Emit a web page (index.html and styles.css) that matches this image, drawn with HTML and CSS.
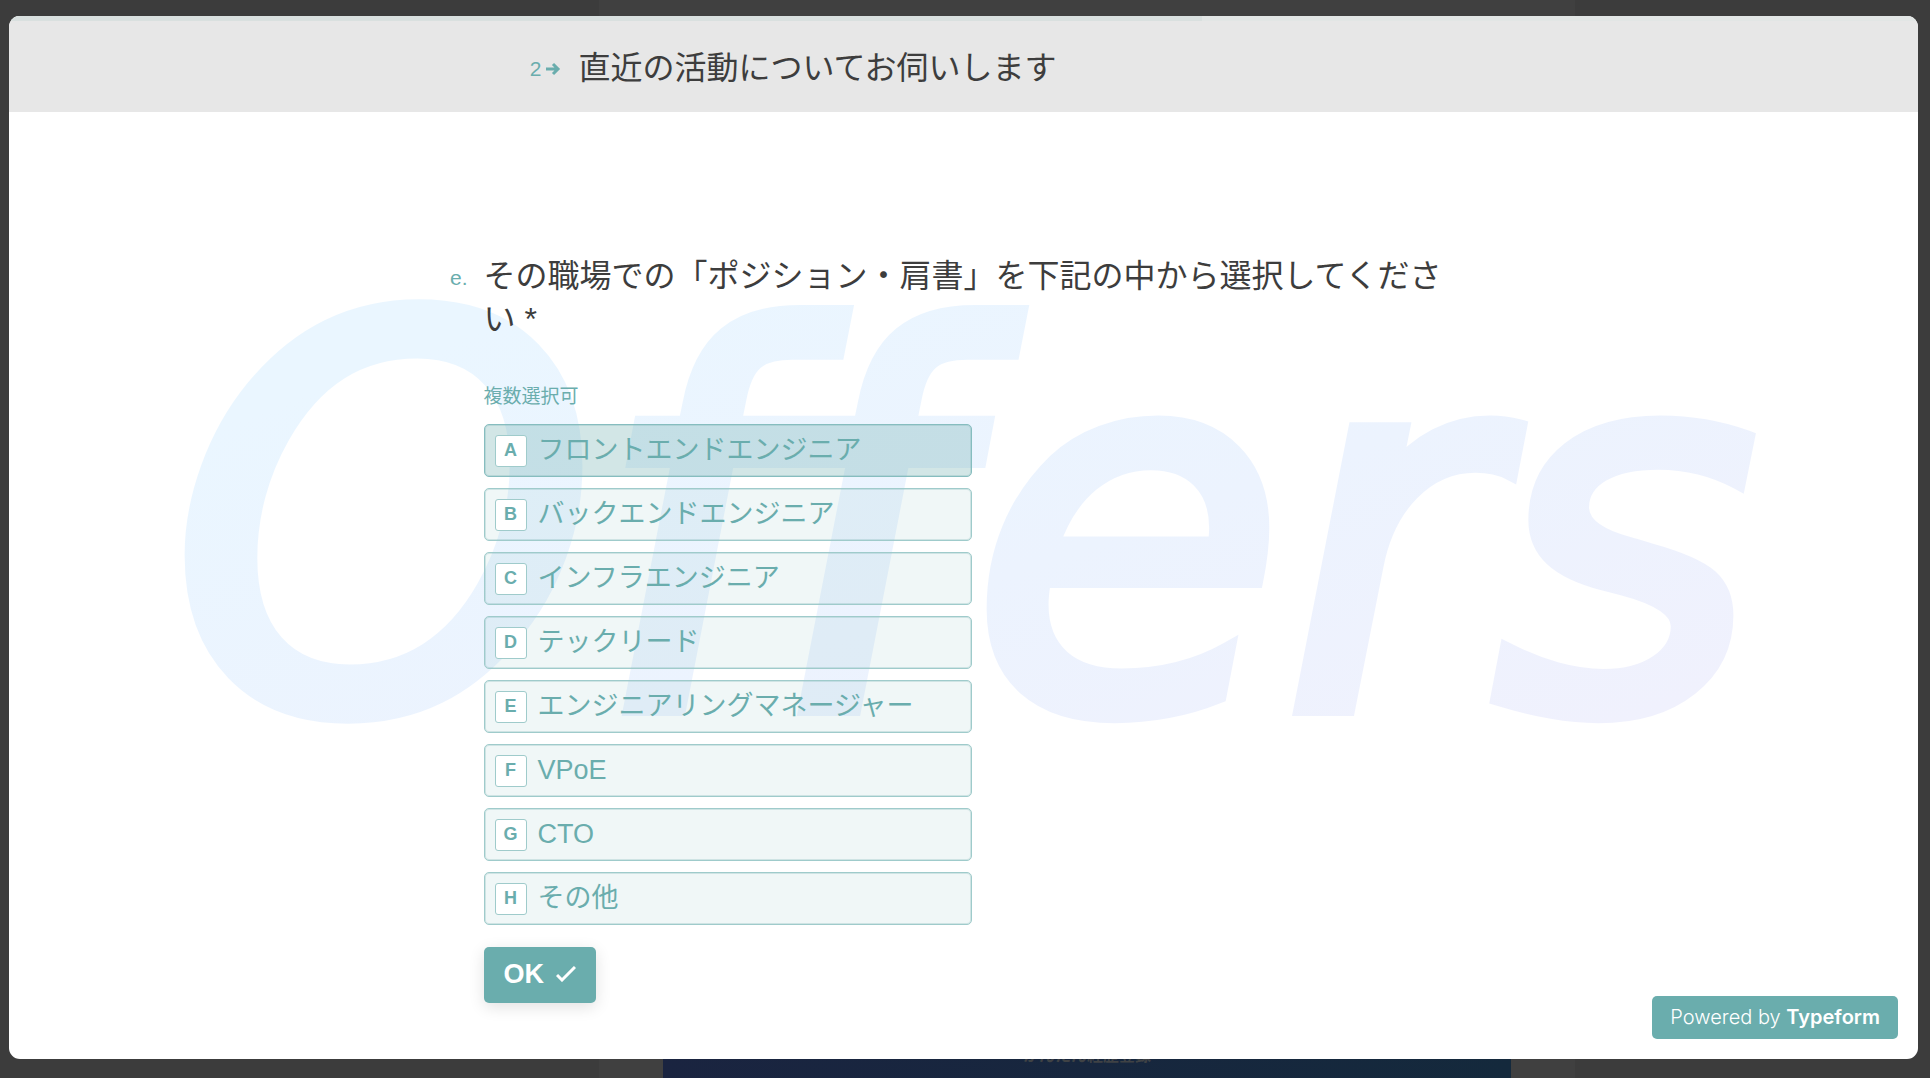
FILE: index.html
```html
<!DOCTYPE html>
<html lang="ja">
<head>
<meta charset="utf-8">
<meta name="viewport" content="width=device-width, initial-scale=1">
<title>直近の活動についてお伺いします</title>
<link rel="stylesheet" href="styles.css">
</head>
<body>
<div class="backdrop" aria-hidden="true">
  <div class="backdrop-page">
    <div class="backdrop-banner">かんたん経歴登録</div>
  </div>
</div>

<main class="modal">
  <svg class="watermark" viewBox="0 0 1909 1043" aria-hidden="true">
    <defs>
      <linearGradient id="wash" gradientUnits="userSpaceOnUse" x1="650" y1="0" x2="1050" y2="1100">
        <stop offset="0.2" stop-color="#eaf6ff"/>
        <stop offset="0.55" stop-color="#ecf3fe"/>
        <stop offset="0.85" stop-color="#f0f1fd"/>
      </linearGradient>
    </defs>
    <text class="watermark-text" x="162" y="692"><tspan class="watermark-cap">O</tspan>ff<tspan class="watermark-tail">ers</tspan></text>
  </svg>

  <div class="progress"><div class="progress-fill" style="width: 62.5%"></div></div>

  <header class="group-header">
    <div class="group-number">2
      <svg class="arrow" viewBox="0 0 16 14" aria-hidden="true"><path d="M0 7H12M7 2l5 5-5 5"/></svg>
    </div>
    <h1 class="group-title">直近の活動についてお伺いします</h1>
  </header>

  <form class="question">
    <div class="question-number">e.</div>
    <div class="question-body">
      <h2 class="question-title">その職場での「ポジション・肩書」を下記の中から選択してください *</h2>
      <p class="hint">複数選択可</p>
      <div class="options">
        <label class="option"><input type="checkbox" name="position" checked><span class="key">A</span><span class="name">フロントエンドエンジニア</span></label>
        <label class="option"><input type="checkbox" name="position"><span class="key">B</span><span class="name">バックエンドエンジニア</span></label>
        <label class="option"><input type="checkbox" name="position"><span class="key">C</span><span class="name">インフラエンジニア</span></label>
        <label class="option"><input type="checkbox" name="position"><span class="key">D</span><span class="name">テックリード</span></label>
        <label class="option"><input type="checkbox" name="position"><span class="key">E</span><span class="name">エンジニアリングマネージャー</span></label>
        <label class="option"><input type="checkbox" name="position"><span class="key">F</span><span class="name">VPoE</span></label>
        <label class="option"><input type="checkbox" name="position"><span class="key">G</span><span class="name">CTO</span></label>
        <label class="option"><input type="checkbox" name="position"><span class="key">H</span><span class="name">その他</span></label>
      </div>
      <button class="ok" type="button">OK
        <svg class="check" viewBox="0 0 20 16" aria-hidden="true"><path d="M1 9l5 5L19 1"/></svg>
      </button>
    </div>
  </form>

  <a class="badge" href="#">Powered by <strong>Typeform</strong></a>
</main>
</body>
</html>
```
FILE: styles.css
```css
:root {
  --teal: #6aadad;
  --ink: #3d3d3d;
}

* { box-sizing: border-box; }

body {
  margin: 0;
  padding: 16px 12px 19px 9px;
  min-height: 100vh;
  display: flex;
  background: #3c3c3c;
  color: var(--ink);
  font-family: "Liberation Sans", "Noto Sans CJK JP", sans-serif;
}

/* dimmed page behind the dialog */
.backdrop {
  position: fixed;
  inset: 0;
  z-index: -1;
  padding-left: 244px;
  display: flex;
  justify-content: center;
}

.backdrop-page {
  width: 976px;
  display: flex;
  flex-direction: column;
  justify-content: flex-end;
  align-items: center;
  background: #404040;
}

.backdrop-banner {
  width: 848px;
  height: 36px;
  background: linear-gradient(90deg, #1a2440, #14293c);
  color: #3f4245;
  font-size: 16px;
  font-weight: 700;
  line-height: 28px;
  text-align: center;
}

.modal {
  position: relative;
  isolation: isolate;
  flex: 1;
  min-width: 0;
  overflow: hidden;
  border-radius: 11px;
  background: #fff;
}

.watermark {
  position: absolute;
  top: 0;
  left: 0;
  z-index: -1;
  width: 100%;
}

.watermark-text {
  font-family: "DejaVu Sans", sans-serif;
  font-size: 520px;
  font-style: oblique;
  fill: url(#wash);
  stroke: url(#wash);
  stroke-width: 16px;
}

.watermark-cap { font-size: 540px; }

.watermark-tail { font-size: 508px; }

.progress {
  position: absolute;
  top: 0;
  left: 0;
  width: 100%;
  height: 5px;
  background: #e2e6e5;
}

.progress-fill {
  height: 100%;
  background: #d9e0df;
}

.group-header {
  display: grid;
  grid-template-columns: 1fr minmax(0, 770px) 1fr;
  align-items: center;
  height: 96px;
  padding-top: 9px;
  background: #e7e7e7;
}

.group-number {
  display: flex;
  align-items: center;
  gap: 4px;
  justify-self: end;
  padding-right: 17px;
  color: var(--teal);
  font-size: 21px;
}

.arrow {
  width: 16px;
  height: 14px;
  fill: none;
  stroke: var(--teal);
  stroke-width: 3;
}

.group-title,
.question-title {
  margin: 0;
  font-size: 32px;
  font-weight: 400;
  line-height: 43px;
}

.question {
  display: grid;
  grid-template-columns: 1fr minmax(0, 960px) 1fr;
  padding: 143px 0 40px;
}

.question-number {
  justify-self: end;
  padding-right: 16px;
  color: var(--teal);
  font-size: 21px;
  line-height: 46px;
}

.hint {
  margin: 43px 0 14px;
  color: var(--teal);
  font-size: 19px;
  line-height: 26px;
}

.options {
  display: flex;
  flex-direction: column;
  gap: 11px;
  width: 488px;
  max-width: 100%;
}

.option {
  position: relative;
  display: flex;
  align-items: center;
  gap: 11px;
  height: 53px;
  padding: 0 10px;
  border: 1px solid #9fcbcb;
  border-radius: 5px;
  background: rgba(106, 173, 173, 0.1);
  box-shadow: inset 0 0 0 1px rgba(106, 173, 173, 0.25);
  color: var(--teal);
  cursor: pointer;
}

.option:has(input:checked) {
  border-color: #86bdbf;
  background: rgba(106, 173, 173, 0.3);
}

.option input {
  position: absolute;
  opacity: 0;
  margin: 0;
}

.key {
  width: 32px;
  height: 32px;
  border: 1px solid #9fcbcb;
  border-radius: 3px;
  background: #fff;
  font-size: 18px;
  font-weight: 700;
  line-height: 29px;
  text-align: center;
}

.name {
  padding-bottom: 2px;
  font-size: 27px;
  line-height: 32px;
}

.ok {
  display: flex;
  align-items: center;
  gap: 12px;
  height: 56px;
  margin-top: 22px;
  padding: 0 20px 2px;
  border: 0;
  border-radius: 5px;
  background: var(--teal);
  box-shadow: 0 4px 16px rgba(0, 0, 0, 0.12);
  color: #fff;
  font: 700 27px "Liberation Sans", sans-serif;
}

.check {
  width: 20px;
  height: 16px;
  fill: none;
  stroke: #fff;
  stroke-width: 3;
}

.badge {
  position: absolute;
  right: 20px;
  bottom: 20px;
  height: 43px;
  padding: 0 18px;
  border-radius: 5px;
  background: var(--teal);
  color: #fff;
  font: 300 20px/43px Inter, sans-serif;
  text-decoration: none;
}

.badge strong { font-weight: 600; }
```
